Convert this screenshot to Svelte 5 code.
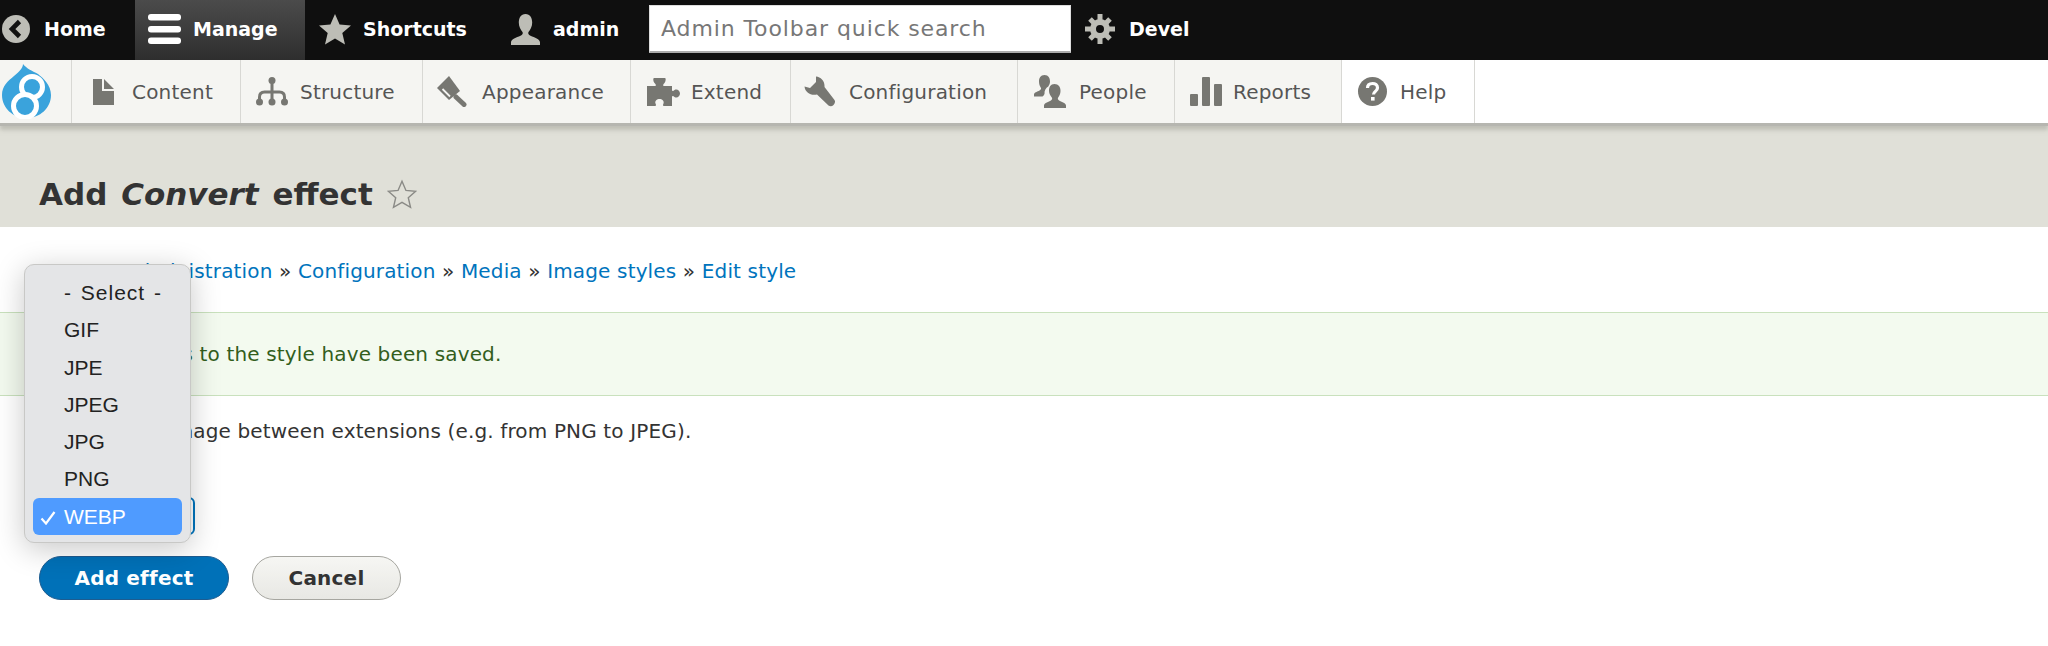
<script>
  const tabs = [
    { label: 'Content', w: 169, pad: 21, gap: 18, icon: 'content' },
    { label: 'Structure', w: 182, pad: 15, gap: 12, icon: 'structure' },
    { label: 'Appearance', w: 208, pad: 14, gap: 15, icon: 'appearance' },
    { label: 'Extend', w: 160, pad: 16, gap: 11, icon: 'extend' },
    { label: 'Configuration', w: 227, pad: 13, gap: 14, icon: 'config' },
    { label: 'People', w: 157, pad: 16, gap: 13, icon: 'people' },
    { label: 'Reports', w: 167, pad: 15, gap: 11, icon: 'reports' },
    { label: 'Help', w: 133, pad: 16, gap: 13, icon: 'help', white: true }
  ];
  const options = ['GIF', 'JPE', 'JPEG', 'JPG', 'PNG'];
</script>

<div class="page">
  <header class="top">
    <a class="tp home">
      <svg width="28" height="28" viewBox="0 0 28 28"><circle cx="14" cy="14" r="14" fill="#bdbdb6"/><path d="M17.500 6.500 10 14l7.500 7.500" fill="none" stroke="#111" stroke-width="4.600"/></svg>
      <span>Home</span>
    </a>
    <a class="tp manage">
      <svg width="33" height="30" viewBox="0 0 33 30"><rect width="33" height="6.500" rx="3" fill="#fff"/><rect y="12" width="33" height="6.500" rx="3" fill="#fff"/><rect y="23.500" width="33" height="6.500" rx="3" fill="#fff"/></svg>
      <span>Manage</span>
    </a>
    <a class="tp shortcuts">
      <svg width="32" height="31" viewBox="0 0 32 31"><path d="M16 0l4.600 10.600 11.400 1-8.700 7.500 2.700 11.300L16 24.400 6 30.400l2.700-11.300L0 11.600l11.400-1z" fill="#bdbdb6"/></svg>
      <span>Shortcuts</span>
    </a>
    <a class="tp admin">
      <svg width="31" height="31" viewBox="0 0 31 31"><path d="M15.500 0c4.600 0 6.700 4 6.700 8.600 0 4.200-2 7.400-3.700 9.400-.8 1 0 3 2 3.800 4 1.700 9.500 3.200 9.500 6.700V31H1v-2.500c0-3.500 5.500-5 9.500-6.700 2-.8 2.800-2.800 2-3.800-1.700-2-3.700-5.200-3.700-9.400C8.800 4 10.900 0 15.500 0z" fill="#bdbdb6"/></svg>
      <span>admin</span>
    </a>
    <input class="search" placeholder="Admin Toolbar quick search" />
    <a class="tp devel">
      <svg width="30" height="30" viewBox="0 0 30 30"><g fill="#bdbdb6"><path d="M15 5a10 10 0 1 0 0 20 10 10 0 0 0 0-20zm0 6a4 4 0 1 1 0 8 4 4 0 0 1 0-8z" fill-rule="evenodd"/><path d="M12.500 0h5v6h-5zM12.500 24h5v6h-5zM0 12.500h6v5H0zM24 12.500h6v5h-6zM3.200 6.800l3.600-3.600 4.200 4.200-3.600 3.600zM19 22.600l3.600-3.600 4.200 4.200-3.600 3.600zM3.200 23.200L7.400 19l3.600 3.600-4.200 4.200zM19 7.400l4.200-4.200 3.600 3.600-4.200 4.200z"/></g></svg>
      <span>Devel</span>
    </a>
  </header>

  <nav class="bar">
    <a class="logo" aria-label="Drupal">
      <svg width="49" height="55" viewBox="0 0 49 55">
        <path d="M21 0C21 4 17 8 12 12 6 17 0 22 0 31 0 44 11 54 24.500 54 38 54 49 44 49 31 49 21 41 14 36 10 30 7 24 4 21 0Z" fill="#3aa3dc"/>
        <circle cx="30" cy="23" r="10.500" fill="#3aa3dc" stroke="#fff" stroke-width="5"/>
        <circle cx="23" cy="42" r="11.500" fill="#3aa3dc" stroke="#fff" stroke-width="5"/>
      </svg>
    </a>
    {#each tabs as t}
      <a class="tab" class:white={t.white} style="width:{t.w}px;padding-left:{t.pad}px;gap:{t.gap}px">
        {#if t.icon === 'content'}
          <svg width="21" height="26" viewBox="0 0 21 26"><path d="M0 0h9v12h12v14H0zM11 0l10 10H11z" fill="#777772"/></svg>
        {:else if t.icon === 'structure'}
          <svg width="32" height="29" viewBox="0 0 32 29"><g fill="#777772"><circle cx="16" cy="3.500" r="3.500"/><circle cx="3.500" cy="25" r="3.500"/><circle cx="16" cy="25" r="3.500"/><circle cx="28.500" cy="25" r="3.500"/></g><path d="M16 3v22M3.500 25v-5q0-5 5-5h15q5 0 5 5v5" fill="none" stroke="#777772" stroke-width="3"/></svg>
        {:else if t.icon === 'appearance'}
          <svg width="30" height="31" viewBox="0 0 30 31"><path d="M12 0 23 15 12 24 0 12z" fill="#777772"/><path d="M5.500 13 13 20.500" stroke="#f5f5f2" stroke-width="1.800"/><path d="M19 21l8 7.500" stroke="#777772" stroke-width="5" stroke-linecap="round"/></svg>
        {:else if t.icon === 'extend'}
          <svg width="33" height="29" viewBox="0 0 33 29"><path d="M0 9H8C9.500 9 9 7 7.500 6 6 4 6 1 7 1H18C19 1 19 4 17.500 6 16 7 15.500 9 17 9H25V13C25 14.500 26.500 14 27.500 13 30 11.500 33 13.500 33 16.500 33 19.500 30 21.500 27.500 20 26.500 19 25 18.500 25 20V29H17C15.500 29 16 27.500 16.500 26.500 17.500 24 15 22 12.500 22 10 22 7.500 24 8.500 26.500 9 27.500 9.500 29 8 29H0Z" fill="#777772"/></svg>
        {:else if t.icon === 'config'}
          <svg width="31" height="31" viewBox="0 0 31 31"><path d="M12 0.500C17 1 21 5 20.500 11L30.500 24C31.500 25.500 31 27.500 29.500 29 28 30.500 26 30.500 24.500 29.500L13 18.500C7 20 1 16.500.5 10.500L6 12 12 6Z" fill="#777772"/></svg>
        {:else if t.icon === 'people'}
          <svg width="32" height="33" viewBox="0 0 32 33"><path d="M10.500 0c4 0 5.500 3 5.500 6.500 0 2-.7 3.500-1.700 5-2.500 1.500-4 4-3.800 7.500-.6 1-1 2-2 2.500H0v-2c0-2 3.500-3 5.500-4 1.500-.8 2-2 1.200-3C5.800 11 5 9 5 6.500 5 3 6.500 0 10.500 0z" fill="#777772"/><path d="M20.500 9c4 0 6 3 6 7 0 3-1.200 5-2.300 6.500-.8 1-.2 2.500 1.300 3.200 2.500 1.200 6.500 2.300 6.500 4.800V33H10v-2.500c0-2.500 4-3.600 6.500-4.800 1.500-.7 2.100-2.200 1.300-3.200C16.700 21 15 19 15 16c0-4 1.500-7 5.500-7z" fill="#777772"/></svg>
        {:else if t.icon === 'reports'}
          <svg width="32" height="29" viewBox="0 0 32 29"><g fill="#777772"><rect y="17" width="8" height="12" rx="1"/><rect x="12" width="8" height="29" rx="1"/><rect x="24" y="7" width="8" height="22" rx="1"/></g></svg>
        {:else}
          <svg width="29" height="29" viewBox="0 0 29 29"><circle cx="14.500" cy="14.500" r="14.500" fill="#777772"/><path d="M9.500 11c0-3 2.200-4.500 5-4.500s5 1.500 5 4.200c0 3.600-4 3.700-4 6.800" fill="none" stroke="#fff" stroke-width="3.200"/><rect x="13" y="20" width="3.600" height="3.600" fill="#fff"/></svg>
        {/if}
        <span>{t.label}</span>
      </a>
    {/each}
  </nav>

  <section class="title">
    <h1>Add <em>Convert</em> effect</h1>
    <svg class="fav" width="30" height="30" viewBox="0 0 32 31"><path d="M16 2l4.200 9.700 10.400.9-7.900 6.900 2.400 10.200L16 24.400l-9.100 5.300 2.400-10.200-7.900-6.900 10.400-.9z" fill="none" stroke="#8a8a86" stroke-width="1.500"/></svg>
  </section>

  <main>
    <p class="crumbs"><a>Home</a> » <a>Administration</a> » <a>Configuration</a> » <a>Media</a> » <a>Image styles</a> » <a>Edit style</a></p>
    <div class="msg">Changes to the style have been saved.</div>
    <p class="help">Converts an image between extensions (e.g. from PNG to JPEG).</p>
    <div class="field">
      <div class="sel">WEBP</div>
    </div>
    <div class="actions">
      <button class="primary">Add effect</button>
      <button class="cancel">Cancel</button>
    </div>
  </main>

  <ul class="popup">
    <li class="first">- Select -</li>
    {#each options as o}
      <li>{o}</li>
    {/each}
    <li class="on"><svg width="16" height="14" viewBox="0 0 16 14"><path d="M1.500 7.500 6 12.500 14.500 1" fill="none" stroke="#fff" stroke-width="2.200"/></svg>WEBP</li>
  </ul>
</div>

<style>
  :global(body) { margin: 0; background: #fff; }
  .page { position: relative; width: 2048px; height: 646px; overflow: hidden; font-family: "DejaVu Sans", sans-serif; color: #333; }
  .top { display: flex; align-items: stretch; height: 60px; background: #0f0f0f; }
  .tp { display: flex; align-items: center; color: #fff; font-weight: 700; font-size: 19px; padding-bottom: 2px; box-sizing: border-box; }
  .home { width: 135px; padding-left: 2px; gap: 14px; }
  .manage { width: 170px; padding-left: 13px; gap: 12px; background: linear-gradient(#4b4b4b, #2e2e2e); }
  .shortcuts { width: 205px; padding-left: 14px; gap: 12px; }
  .admin { width: 139px; gap: 12px; }
  .search { width: 422px; height: 48px; margin-top: 5px; box-sizing: border-box; border: 1px solid #ddd; border-bottom: 2px solid #aaa; background: #fff; padding: 0 11px; font: 22px "DejaVu Sans", sans-serif; letter-spacing: .9px; outline: none; }
  .search::placeholder { color: #777; opacity: 1; }
  .devel { margin-left: 14px; gap: 14px; }
  .bar { display: flex; height: 63px; background: #fff; box-shadow: 0 3px 0 #b6b6b0, 0 7px 4px rgba(160,160,150,.5); position: relative; }
  .logo { width: 72px; flex: none; display: flex; align-items: center; padding-left: 2px; box-sizing: border-box; background: #f5f5f2; border-right: 1px solid #d8d8d4; }
  .tab { flex: none; display: flex; align-items: center; box-sizing: border-box; background: #f5f5f2; border-right: 1px solid #d8d8d4; color: #555; font-size: 20px; letter-spacing: .2px; }
  .tab.white { background: #fff; }
  .title { display: flex; align-items: flex-end; gap: 14px; height: 104px; box-sizing: border-box; padding: 0 39px 13px; background: #e0e0d8; }
  h1 { margin: 0; font-size: 31px; line-height: 40px; font-weight: 700; color: #333; word-spacing: 3px; }
  em { font-style: italic; }
  .fav { margin-bottom: 5px; }
  main { padding: 33px 0 0; }
  .crumbs { margin: 0 39px; font-size: 20px; letter-spacing: .15px; line-height: 22px; color: #333; }
  .crumbs a { color: #0074bd; }
  .msg { margin-top: 30px; height: 84px; box-sizing: border-box; display: flex; align-items: center; padding-left: 105px; background: #f3faef; border-top: 1px solid #c9e1bd; border-bottom: 1px solid #c9e1bd; color: #325e1c; font-size: 20px; letter-spacing: .15px; }
  .help { margin: 24px 39px 0; font-size: 20px; letter-spacing: .15px; line-height: 22px; }
  .field { margin: 55px 0 0 39px; }
  .sel { width: 156px; height: 38px; box-sizing: border-box; border: 2px solid #0074bd; border-radius: 6px; background: #fff; padding: 6px 10px; font-size: 18px; }
  .actions { display: flex; gap: 23px; margin: 21px 39px 0; }
  button { height: 44px; border-radius: 22px; font: 700 20px "DejaVu Sans", sans-serif; letter-spacing: .2px; padding: 0; }
  .primary { width: 190px; background: #0071b8; border: 1px solid #1e5c90; color: #fff; }
  .cancel { width: 149px; background: linear-gradient(#f6f6f3, #e8e8e4); border: 1px solid #a6a6a0; color: #333; }
  .popup { position: absolute; left: 24px; top: 264px; width: 167px; height: 279px; box-sizing: border-box; margin: 0; padding: 9px 8px 8px; list-style: none; background: #e4e5e7; border: 1px solid #c8c8c6; border-radius: 10px; box-shadow: 0 6px 30px rgba(0,0,0,.22); font-family: "Liberation Sans", sans-serif; font-size: 21px; color: #222; }
  .popup li { height: 37.300px; line-height: 37.300px; padding-left: 31px; position: relative; border-radius: 6px; }
  .popup .first { letter-spacing: 1px; word-spacing: 2px; }
  .popup .on { background: #4f9bff; color: #fff; }
  .popup .on svg { position: absolute; left: 7px; top: 13px; }
</style>
